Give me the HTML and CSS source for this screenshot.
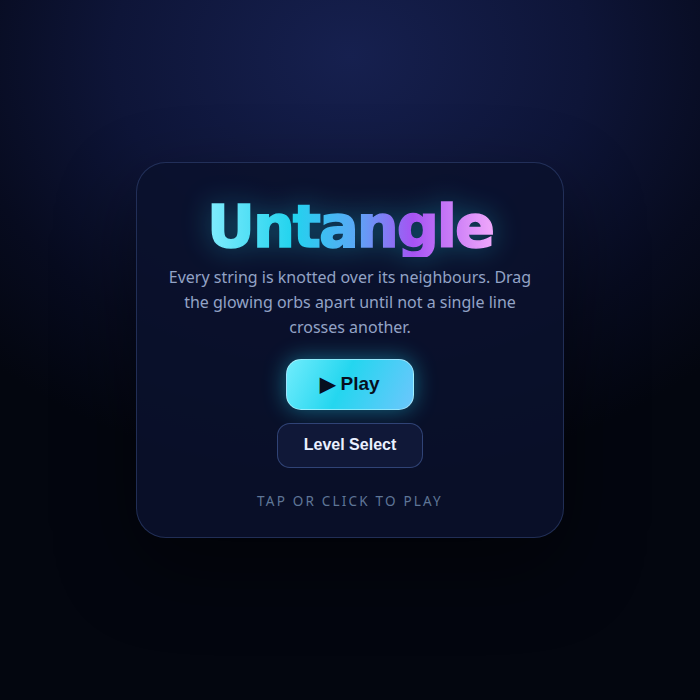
FILE: index.html
```html
<!DOCTYPE html>
<html>
<head>
<meta charset="utf-8">
<link rel="stylesheet" href="styles.css">
</head>
<body>
<main class="stage">
  <section class="card">
    <h1 class="title">Untangle</h1>
    <p class="intro">Every string is knotted over its neighbours. Drag the glowing orbs apart until not a single line crosses another.</p>
    <button class="btn-play"><span class="tri">▶</span> Play</button>
    <button class="btn-levels">Level Select</button>
    <p class="hint">TAP OR CLICK TO PLAY</p>
  </section>
</main>
</body>
</html>
```

FILE: styles.css
```css
html, body {
  margin: 0;
  height: 100%;
}
body {
  background: radial-gradient(ellipse 75% 60% at 50% 8%, #16204f 0%, #0e1538 45%, #070b1f 75%, #03060f 100%);
  font-family: "Noto Sans", "Open Sans", sans-serif;
}
.stage {
  height: 700px;
  display: flex;
  align-items: center;
  justify-content: center;
}
.card {
  width: 428px;
  box-sizing: border-box;
  height: 376px;
  margin-top: -1px;
  padding: 32px 24px 0;
  border-radius: 30px;
  border: 1px solid rgba(90, 120, 190, 0.3);
  background: rgba(10, 17, 44, 0.88);
  box-shadow: 0 30px 80px rgba(0, 0, 0, 0.45);
  display: flex;
  flex-direction: column;
  align-items: center;
}
.title {
  margin: 0;
  font-family: "DejaVu Sans", sans-serif;
  font-weight: 700;
  font-size: 59px;
  line-height: 64px;
  height: 62px;
  letter-spacing: -0.035em;
  -webkit-text-stroke: 1.6px transparent;
  background: linear-gradient(90deg, #82ecfd 0%, #22d3ee 30%, #5aa8f6 52%, #a653f3 72%, #f0a8fb 100%);
  -webkit-background-clip: text;
  background-clip: text;
  color: transparent;
  filter: drop-shadow(0 0 14px rgba(34, 211, 238, 0.35));
}
.intro {
  margin: 8px 0 0;
  max-width: 376px;
  text-align: center;
  font-size: 16px;
  line-height: 25px;
  color: #93a3c6;
}
.btn-play {
  margin-top: 19px;
  width: 128px;
  height: 51px;
  border: 1px solid rgba(200, 245, 255, 0.6);
  border-radius: 15px;
  background: linear-gradient(115deg, #70ecfc 0%, #24d6ef 45%, #6cc6fc 100%);
  box-shadow: 0 0 22px rgba(34, 211, 238, 0.45);
  font-family: "Liberation Sans", Arial, sans-serif;
  font-weight: 700;
  font-size: 19px;
  color: #07101f;
}
.tri {
  font-size: 20px;
  vertical-align: -1px;
}
.btn-levels {
  margin-top: 13px;
  width: 146px;
  height: 45px;
  border: 1px solid rgba(80, 110, 180, 0.5);
  border-radius: 13px;
  background: #101838;
  font-family: "Liberation Sans", Arial, sans-serif;
  font-weight: 700;
  font-size: 16px;
  color: #eaf0ff;
}
.hint {
  margin: 24px 0 0;
  font-size: 13.5px;
  letter-spacing: 2.2px;
  color: #5f7697;
}
```
